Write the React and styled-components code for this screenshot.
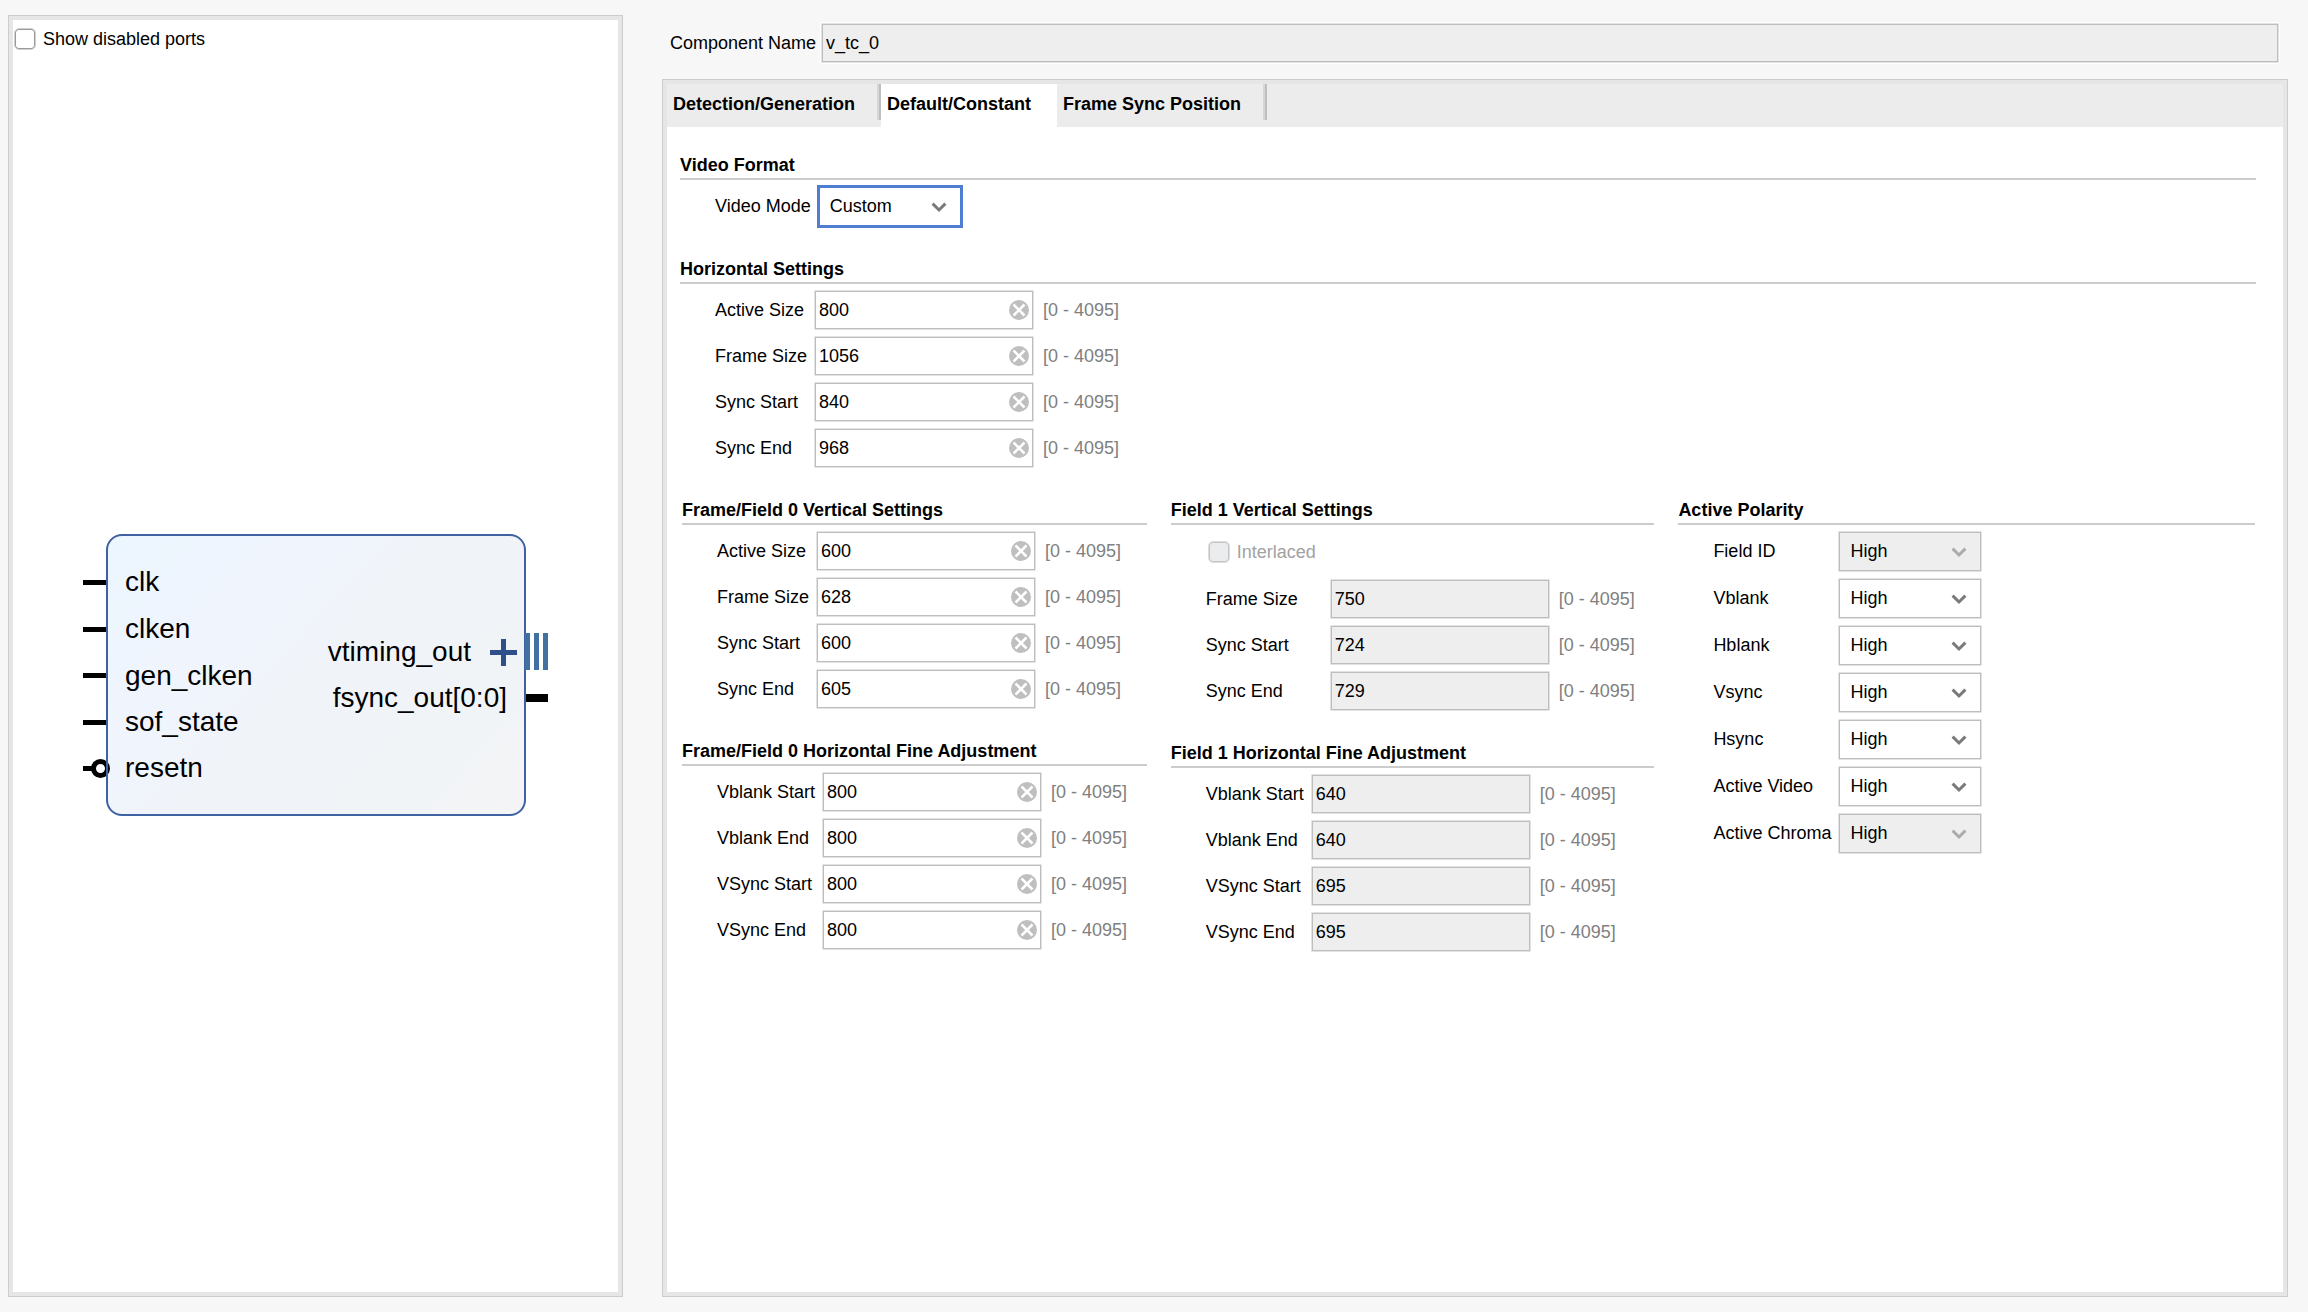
import React, { useId, useState } from "react";
import styled, { createGlobalStyle, css } from "styled-components";

const color = {
  page: "#f7f7f7",
  surface: "#ffffff",
  disabled: "#eeeeee",
  tabBar: "#ececec",
  frame: "#e6e6e6",
  frameEdge: "#cdcdcd",
  rule: "#cccccc",
  field: "#bebebe",
  fieldEdge: "#e2e2e2",
  focus: "#4f7dd1",
  muted: "#808080",
  faint: "#a2a2a2",
};

const GlobalStyle = createGlobalStyle`
  *, *::before, *::after { box-sizing: border-box; }
  body {
    margin: 0;
    background: ${color.page};
    color: #000;
    font-family: "Liberation Sans", Arial, sans-serif;
    font-size: 18px;
    line-height: 24px;
  }
  button, input, select { font: inherit; color: inherit; }
`;

const Page = styled.div`
  display: grid;
  grid-template-columns: minmax(0, 615fr) minmax(0, 1626fr);
  column-gap: 39px;
  min-height: 100vh;
  padding: 15px 20px 15px 8px;
`;

const Frame = styled.section`
  display: flex;
  flex-direction: column;
  border: 1px solid ${color.frameEdge};
  background: ${color.surface};
  outline: 4px solid ${color.frame};
  outline-offset: -5px;
  padding: 4px;
`;

const PreviewFrame = styled(Frame)`
  min-height: 0;
`;

const CheckLabel = styled.label`
  display: flex;
  align-items: center;
  gap: 7px;
  color: ${(p) => (p.$disabled ? color.faint : "inherit")};
`;

const PreviewOption = styled(CheckLabel)`
  padding: 7px 1px;
`;

const InterlacedOption = styled(CheckLabel)`
  height: 42px;
  padding: 0 7px 0 2px;
  margin-right: 7px;
`;

const CheckBox = styled.input`
  appearance: none;
  width: 22px;
  height: 22px;
  margin: 0;
  border: 1px solid #d0d0d0;
  border-radius: 5px;
  box-shadow: inset 0 0 0 1px #999999;
  background: ${color.surface};

  &:checked { background: ${color.focus}; }
  &:disabled {
    background: #ebecee;
    border-color: #dedede;
    box-shadow: inset 0 0 0 1px #c4c4c4;
  }
`;

const Canvas = styled.div`
  flex: 1;
  display: grid;
  place-items: center;
`;

const Symbol = styled.svg`
  display: block;
  font-size: 28px;
`;

const Settings = styled.div`
  display: flex;
  flex-direction: column;
  gap: 16px;
`;

const NameRow = styled.div`
  display: flex;
  align-items: center;
  gap: 5px;
  padding: 8px 9px 0 8px;
`;

const NameInput = styled.input`
  flex: 1;
  min-width: 0;
  height: 40px;
  padding: 0 4px;
  border: 1px solid ${color.fieldEdge};
  border-radius: 1px;
  box-shadow: inset 0 0 0 1px ${color.field}, 0 0 0 1px #fff;
  background: ${color.disabled};
  outline: none;
`;

const TabFrame = styled(Frame)`
  flex: 1;
`;

const TabBar = styled.div`
  display: flex;
  height: 43px;
  background: ${color.tabBar};
`;

const Tab = styled.button`
  display: flex;
  padding: 0 0 0 6px;
  border: 0;
  background: ${(p) => (p.$active ? color.surface : "transparent")};
  font-weight: bold;
  line-height: 40px;
  white-space: nowrap;

  &::after {
    content: "";
    width: 4px;
    height: 36px;
    margin-left: 22px;
    border-left: 2px solid #d6d6d6;
    border-right: 2px solid #bfbfbf;
    visibility: ${(p) => (p.$active ? "hidden" : "visible")};
  }
`;

const TabPanel = styled.div`
  display: flex;
  flex-direction: column;
  gap: 29px;
  padding: 25px 27px 25px 13px;
`;

const Columns = styled.div`
  display: grid;
  grid-template-columns: minmax(0, 465fr) minmax(0, 484fr) minmax(0, 577fr);
  column-gap: 24px;
  align-items: start;
  padding: 0 1px 0 2px;
`;

const Column = styled.div`
  display: flex;
  flex-direction: column;
  gap: 29px;
`;

const GroupTitle = styled.h2`
  margin: 0 0 6px;
  border-bottom: 2px solid ${color.rule};
  font-size: 18px;
  line-height: 26px;
`;

const Rows = styled.div`
  display: grid;
  grid-template-columns: auto auto auto;
  justify-content: start;
  align-items: center;
  row-gap: 6px;
  padding-left: 35px;
  white-space: nowrap;
`;

const FieldLabel = styled.label`
  grid-column: 1;
  padding-right: 7px;
`;

const SelectLabel = styled(FieldLabel)`
  padding-bottom: 1px;
`;

const Range = styled.span`
  padding-left: 9px;
  color: ${color.muted};
`;

const box = css`
  border: 1px solid ${color.fieldEdge};
  border-radius: 1px;
  box-shadow: inset 0 0 0 1px ${color.field};
  background: ${(p) => (p.$disabled ? color.disabled : color.surface)};
`;

const NumberBox = styled.div`
  ${box}
  display: flex;
  align-items: center;
  width: 220px;
  height: 40px;
  padding: 1px 4px 1px 1px;
`;

const NumberInput = styled.input`
  flex: 1;
  min-width: 0;
  padding: 0 3px;
  border: 0;
  outline: none;
  background: transparent;

  &:disabled { color: #000; }
`;

const ClearButton = styled.button`
  display: flex;
  padding: 0;
  border: 0;
  background: none;
`;

const SelectBox = styled.div`
  ${box}
  display: grid;
  align-items: center;
  width: 144px;
  height: 41px;

  ${(p) =>
    p.$focused &&
    css`
      border-color: ${color.focus};
      border-radius: 0;
      outline: 1px solid ${color.focus};
      box-shadow: inset 0 0 0 1px ${color.focus};
    `}

  > * { grid-area: 1 / 1; }
`;

const Select = styled.select`
  appearance: none;
  width: 100%;
  height: 100%;
  padding: 0 36px 1px 11px;
  border: 0;
  outline: none;
  background: transparent;

  &:disabled { color: #000; opacity: 1; }
`;

const ChevronIcon = styled.svg`
  justify-self: end;
  margin-right: 14px;
  pointer-events: none;
`;

function Chevron({ disabled }) {
  return (
    <ChevronIcon width="16" height="12" viewBox="0 0 16 12" aria-hidden="true">
      <path
        d="M1.6 2.6 L8 9 L14.4 2.6"
        fill="none"
        stroke={disabled ? "#ababab" : "#7a7a7a"}
        strokeWidth="3"
      />
    </ChevronIcon>
  );
}

function ClearIcon() {
  return (
    <svg width="20" height="20" viewBox="0 0 20 20" aria-hidden="true">
      <circle cx="10" cy="10" r="10" fill="#bfbfbf" />
      <path d="M4.5 4.5 L15.5 15.5 M15.5 4.5 L4.5 15.5" stroke="#fff" strokeWidth="2.5" />
    </svg>
  );
}

function NumberField({ label, value, disabled }) {
  const id = useId();
  const [text, setText] = useState(value);
  return (
    <>
      <FieldLabel htmlFor={id}>{label}</FieldLabel>
      <NumberBox $disabled={disabled}>
        <NumberInput
          id={id}
          type="text"
          value={text}
          disabled={disabled}
          onChange={(e) => setText(e.target.value)}
        />
        {!disabled && (
          <ClearButton type="button" aria-label={`Clear ${label}`} onClick={() => setText("")}>
            <ClearIcon />
          </ClearButton>
        )}
      </NumberBox>
      <Range>[0 - 4095]</Range>
    </>
  );
}

function SelectField({ label, options, disabled, focused }) {
  const id = useId();
  return (
    <>
      <SelectLabel htmlFor={id}>{label}</SelectLabel>
      <SelectBox $disabled={disabled} $focused={focused}>
        <Select id={id} disabled={disabled} defaultValue={options[0]}>
          {options.map((o) => (
            <option key={o}>{o}</option>
          ))}
        </Select>
        <Chevron disabled={disabled} />
      </SelectBox>
    </>
  );
}

function Group({ title, children }) {
  return (
    <section>
      <GroupTitle>{title}</GroupTitle>
      <Rows>{children}</Rows>
    </section>
  );
}

function NumberGroup({ title, fields, disabled, children }) {
  return (
    <Group title={title}>
      {children}
      {fields.map(([label, value]) => (
        <NumberField key={label} label={label} value={value} disabled={disabled} />
      ))}
    </Group>
  );
}

const inputPorts = [
  { name: "clk", pin: 46, base: 57 },
  { name: "clken", pin: 93, base: 104 },
  { name: "gen_clken", pin: 139, base: 151 },
  { name: "sof_state", pin: 186, base: 197 },
  { name: "resetn", pin: 232, base: 243 },
];

function ComponentSymbol() {
  return (
    <Symbol width="465" height="282" viewBox="0 0 465 282" role="img" aria-label="Component symbol">
      <defs>
        <linearGradient id="body" gradientUnits="userSpaceOnUse" x1="60" y1="-20" x2="400" y2="300">
          <stop offset="0" stopColor="#ecf6fe" />
          <stop offset="0.3" stopColor="#f0f4fd" />
          <stop offset="0.5" stopColor="#f0f4f9" />
          <stop offset="0.8" stopColor="#f0f4f7" />
          <stop offset="1" stopColor="#f4f4f6" />
        </linearGradient>
      </defs>
      {inputPorts.map((p) => (
        <rect key={p.name} x="0" y={p.pin} width={p.name === "resetn" ? 12 : 23} height="5" />
      ))}
      <rect x="24" y="1" width="418" height="280" rx="15" fill="url(#body)" stroke="#4062a2" strokeWidth="2" />
      <circle cx="17.5" cy="234.5" r="7" fill="#fff" stroke="#000" strokeWidth="5" />
      <path d="M24 225 V244" stroke="#4062a2" strokeWidth="2" />
      {inputPorts.map((p) => (
        <text key={p.name} x="42" y={p.base}>{p.name}</text>
      ))}
      <text x="388" y="127" textAnchor="end">vtiming_out</text>
      <text x="424" y="173" textAnchor="end">fsync_out[0:0]</text>
      <path d="M407 118.5 H434 M420.5 105 V132" stroke="#2f4f8a" strokeWidth="5" />
      <path d="M444.5 99 V136 M453.5 99 V136 M462.5 99 V136" stroke="#4170a2" strokeWidth="5" />
      <rect x="443" y="160" width="22" height="8" />
    </Symbol>
  );
}

const tabs = ["Detection/Generation", "Default/Constant", "Frame Sync Position"];

const polarity = [
  ["Field ID", true],
  ["Vblank", false],
  ["Hblank", false],
  ["Vsync", false],
  ["Hsync", false],
  ["Active Video", false],
  ["Active Chroma", true],
];

export default function App() {
  return (
    <>
      <GlobalStyle />
      <Page>
        <PreviewFrame>
          <PreviewOption>
            <CheckBox type="checkbox" />
            Show disabled ports
          </PreviewOption>
          <Canvas>
            <ComponentSymbol />
          </Canvas>
        </PreviewFrame>

        <Settings>
          <NameRow>
            <label htmlFor="component-name">Component Name</label>
            <NameInput id="component-name" type="text" value="v_tc_0" readOnly />
          </NameRow>

          <TabFrame>
            <TabBar role="tablist">
              {tabs.map((name, i) => (
                <Tab key={name} type="button" role="tab" aria-selected={i === 1} $active={i === 1}>
                  {name}
                </Tab>
              ))}
            </TabBar>

            <TabPanel role="tabpanel">
              <Group title="Video Format">
                <SelectField label="Video Mode" options={["Custom", "720p", "1080p"]} focused />
              </Group>

              <NumberGroup
                title="Horizontal Settings"
                fields={[
                  ["Active Size", "800"],
                  ["Frame Size", "1056"],
                  ["Sync Start", "840"],
                  ["Sync End", "968"],
                ]}
              />

              <Columns>
                <Column>
                  <NumberGroup
                    title="Frame/Field 0 Vertical Settings"
                    fields={[
                      ["Active Size", "600"],
                      ["Frame Size", "628"],
                      ["Sync Start", "600"],
                      ["Sync End", "605"],
                    ]}
                  />
                  <NumberGroup
                    title="Frame/Field 0 Horizontal Fine Adjustment"
                    fields={[
                      ["Vblank Start", "800"],
                      ["Vblank End", "800"],
                      ["VSync Start", "800"],
                      ["VSync End", "800"],
                    ]}
                  />
                </Column>

                <Column>
                  <NumberGroup
                    title="Field 1 Vertical Settings"
                    disabled
                    fields={[
                      ["Frame Size", "750"],
                      ["Sync Start", "724"],
                      ["Sync End", "729"],
                    ]}
                  >
                    <InterlacedOption $disabled>
                      <CheckBox type="checkbox" disabled />
                      Interlaced
                    </InterlacedOption>
                  </NumberGroup>
                  <NumberGroup
                    title="Field 1 Horizontal Fine Adjustment"
                    disabled
                    fields={[
                      ["Vblank Start", "640"],
                      ["Vblank End", "640"],
                      ["VSync Start", "695"],
                      ["VSync End", "695"],
                    ]}
                  />
                </Column>

                <Column>
                  <Group title="Active Polarity">
                    {polarity.map(([label, disabled]) => (
                      <SelectField key={label} label={label} options={["High", "Low"]} disabled={disabled} />
                    ))}
                  </Group>
                </Column>
              </Columns>
            </TabPanel>
          </TabFrame>
        </Settings>
      </Page>
    </>
  );
}
